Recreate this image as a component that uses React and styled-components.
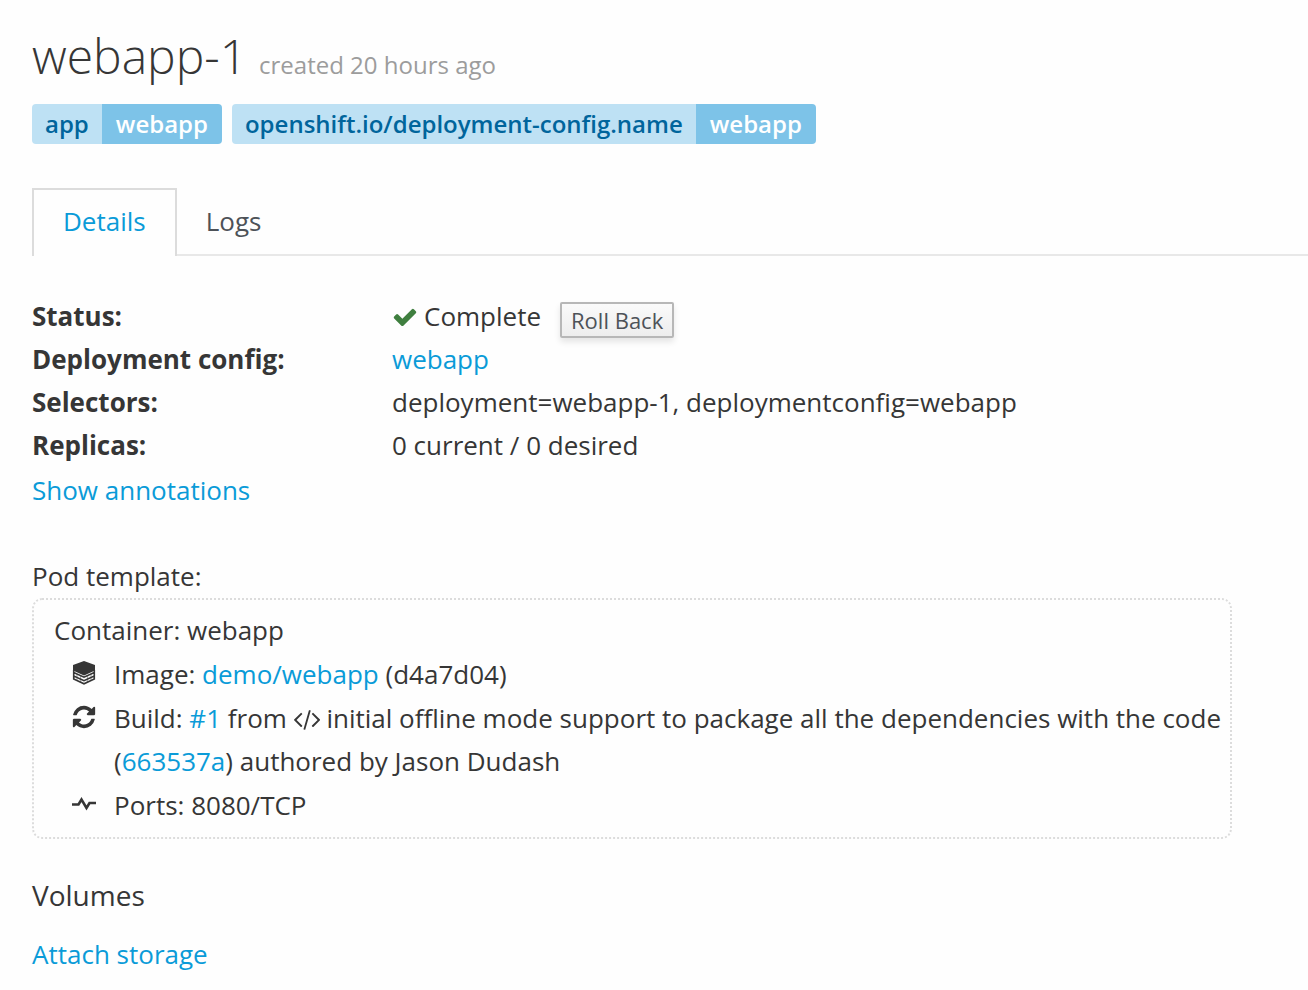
import React from "react";
import styled, { createGlobalStyle } from "styled-components";

const GlobalStyle = createGlobalStyle`
  * { box-sizing: border-box; }
  body {
    margin: 0;
    background: #fefefe;
    color: #363636;
    font: 26px/43px "Open Sans", sans-serif;
  }
`;

const Page = styled.main`
  padding: 30px 0 12px 32px;
`;

const Heading = styled.header`
  display: flex;
  align-items: baseline;
  gap: 12px;
`;

const Title = styled.h1`
  margin: 0;
  font-size: 48px;
  line-height: 52px;
  font-weight: 300;
`;

const Created = styled.span`
  color: #9c9c9c;
  font-size: 24px;
  line-height: 43px;
`;

const Labels = styled.div`
  display: flex;
  flex-wrap: wrap;
  gap: 10px;
  margin-top: 18px;
`;

const Label = styled.span`
  display: flex;
  overflow: hidden;
  border-radius: 4px;
  font-size: 24px;
  line-height: 40px;
  font-weight: 600;
`;

const LabelKey = styled.span`
  padding: 0 13px;
  background: #bee1f4;
  color: #00659c;
`;

const LabelValue = styled.span`
  padding: 0 14px;
  background: #7dc3e8;
  color: #fff;
`;

const TabBar = styled.div`
  display: flex;
  margin-top: 44px;
`;

const Tab = styled.button`
  padding: 10px 29px ${(p) => (p.$active ? "14px" : "12px")};
  border: 2px solid ${(p) => (p.$active ? "#dcdcdc" : "transparent")};
  border-width: ${(p) => (p.$active ? "2px 2px 0" : "2px 0")};
  border-bottom-color: #e8e8e8;
  background: transparent;
  color: ${(p) => (p.$active ? "#0a9bd8" : "#4d5258")};
  font: 26px/42px "Open Sans", sans-serif;
`;

const TabLine = styled.div`
  flex: 1;
  border-bottom: 2px solid #e8e8e8;
`;

const Facts = styled.dl`
  display: grid;
  grid-template-columns: 360px 1fr;
  margin: 39px 0 2px;
`;

const Term = styled.dt`
  font-weight: 700;
`;

const Detail = styled.dd`
  display: flex;
  margin: 0;
`;

const Link = styled.a`
  color: #0a9bd8;
  text-decoration: none;
`;

const RollBack = styled.button`
  align-self: flex-end;
  height: 36px;
  margin-left: 19px;
  padding: 0 9px;
  border: 2px solid #b7b7b7;
  border-radius: 2px;
  background: linear-gradient(#fafafa, #ededed);
  box-shadow: 0 4px 6px rgba(3, 3, 3, 0.1);
  color: #4d5258;
  font: 22px/32px "Open Sans", sans-serif;
`;

const Icon = styled.svg`
  width: 26px;
  height: 26px;
  fill: currentColor;
  color: ${(p) => p.$color || "inherit"};
`;

const StatusIcon = styled.span`
  display: flex;
  align-items: center;
  margin-right: 6px;
`;

const Template = styled.section`
  margin: 43px 76px 0 0;
`;

const Plain = styled.h2`
  margin: 0;
  font-size: inherit;
  font-weight: 400;
`;

const Container = styled.div`
  padding: 9px 0 10px 20px;
  border: 2px dotted #dcdcdc;
  border-radius: 10px;
`;

const Parts = styled.ul`
  display: flex;
  flex-direction: column;
  gap: 1px;
  margin: 1px 0 0;
  padding: 0;
  list-style: none;
`;

const Part = styled.li`
  display: grid;
  grid-template-columns: 60px 1fr;
`;

const PartIcon = styled.span`
  display: flex;
  align-items: center;
  justify-content: center;
  height: 40px;
`;

const InlineIcon = styled(Icon)`
  vertical-align: -4px;
`;

const VolumesTitle = styled.h2`
  margin: 35px 0 16px;
  font-size: 28px;
  line-height: 43px;
  font-weight: 400;
`;

const labels = [
  ["app", "webapp"],
  ["openshift.io/deployment-config.name", "webapp"],
];

const checkPath =
  "M1671 566q0 40-28 68l-724 724-136 136q-28 28-68 28t-68-28l-136-136-362-362q-28-28-28-68t28-68l136-136q28-28 68-28t68 28l294 295 656-657q28-28 68-28t68 28l136 136q28 28 28 68z";
const refreshPath =
  "M1639 1056q0 5-1 7-64 268-268 434.5t-478 166.5q-146 0-282.5-55t-243.5-157l-129 129q-19 19-45 19t-45-19-19-45v-448q0-26 19-45t45-19h448q26 0 45 19t19 45-19 45l-137 137q71 66 161 102t187 36q134 0 250-65t186-179q11-17 53-117 8-23 30-23h192q13 0 22.5 9.5t9.5 22.5zm25-800v448q0 26-19 45t-45 19h-448q-26 0-45-19t-19-45 19-45l138-138q-148-137-349-137-134 0-250 65t-186 179q-11 17-53 117-8 23-30 23h-199q-13 0-22.5-9.5t-9.5-22.5v-7q65-268 270-434.5t480-166.5q146 0 284 55.5t245 156.5l130-129q19-19 45-19t45 19 19 45z";
const codePath =
  "M681 1399l-50 50q-10 10-23 10t-23-10l-466-466q-10-10-10-23t10-23l466-466q10-10 23-10t23 10l50 50q10 10 10 23t-10 23l-393 393 393 393q10 10 10 23t-10 23zm591-1067l-373 1291q-4 13-15.5 19.5t-23.5 2.5l-62-17q-13-4-19.5-15.5t-2.5-24.5l373-1291q4-13 15.5-19.5t23.5-2.5l62 17q13 4 19.5 15.5t2.5 24.5zm657 651l-466 466q-10 10-23 10t-23-10l-50-50q-10-10-10-23t10-23l393-393-393-393q-10-10-10-23t10-23l50-50q10-10 23-10t23 10l466 466q10 10 10 23t-10 23z";

function LayersIcon() {
  return (
    <Icon viewBox="0 0 26 26" aria-hidden="true">
      <path d="M13 1 24 5v5.500L13 15.500 2 10.500V5Z" />
      <path
        d="M2.700 12.500 13 17.200l10.300-4.700M2.700 16 13 20.700 23.300 16M2.700 10v9L13 23.800 23.300 19v-9"
        fill="none"
        stroke="currentColor"
        strokeWidth="1.600"
      />
      <path
        d="M6 14v7M9.500 15.500v7M16.500 15.500v7M20 14v7"
        fill="none"
        stroke="currentColor"
        strokeOpacity="0.400"
        strokeWidth="1.200"
      />
    </Icon>
  );
}

function PulseIcon() {
  return (
    <Icon viewBox="0 0 26 26" aria-hidden="true">
      <path
        d="M1 13.500h6.500L10.500 8.500l5 8.500 3-5H25"
        fill="none"
        stroke="currentColor"
        strokeWidth="2.600"
      />
    </Icon>
  );
}

export default function App() {
  return (
    <>
      <GlobalStyle />
      <Page>
        <Heading>
          <Title>webapp-1</Title>
          <Created>created 20 hours ago</Created>
        </Heading>
        <Labels>
          {labels.map(([key, value]) => (
            <Label key={key}>
              <LabelKey>{key}</LabelKey>
              <LabelValue>{value}</LabelValue>
            </Label>
          ))}
        </Labels>

        <TabBar role="tablist">
          <Tab $active type="button" role="tab" aria-selected="true">Details</Tab>
          <Tab type="button" role="tab" aria-selected="false">Logs</Tab>
          <TabLine />
        </TabBar>

        <Facts>
          <Term>Status:</Term>
          <Detail>
            <StatusIcon>
              <Icon viewBox="0 0 1792 1792" $color="#3f7f3f" aria-hidden="true">
                <path d={checkPath} />
              </Icon>
            </StatusIcon>
            Complete
            <RollBack type="button">Roll Back</RollBack>
          </Detail>
          <Term>Deployment config:</Term>
          <Detail><Link href="#config">webapp</Link></Detail>
          <Term>Selectors:</Term>
          <Detail>deployment=webapp-1, deploymentconfig=webapp</Detail>
          <Term>Replicas:</Term>
          <Detail>0 current / 0 desired</Detail>
        </Facts>
        <Link href="#annotations">Show annotations</Link>

        <Template>
          <Plain>Pod template:</Plain>
          <Container>
            <div>Container: webapp</div>
            <Parts>
              <Part>
                <PartIcon><LayersIcon /></PartIcon>
                <span>Image: <Link href="#image">demo/webapp</Link> (d4a7d04)</span>
              </Part>
              <Part>
                <PartIcon>
                  <Icon viewBox="0 0 1792 1792" aria-hidden="true"><path d={refreshPath} /></Icon>
                </PartIcon>
                <span>
                  Build: <Link href="#build">#1</Link> from{" "}
                  <InlineIcon viewBox="109 0 1820 1792" aria-hidden="true">
                    <path d={codePath} />
                  </InlineIcon>{" "}
                  initial offline mode support to package all the dependencies with the code (
                  <Link href="#commit">663537a</Link>) authored by Jason Dudash
                </span>
              </Part>
              <Part>
                <PartIcon><PulseIcon /></PartIcon>
                <span>Ports: 8080/TCP</span>
              </Part>
            </Parts>
          </Container>
        </Template>

        <VolumesTitle>Volumes</VolumesTitle>
        <Link href="#storage">Attach storage</Link>
      </Page>
    </>
  );
}
